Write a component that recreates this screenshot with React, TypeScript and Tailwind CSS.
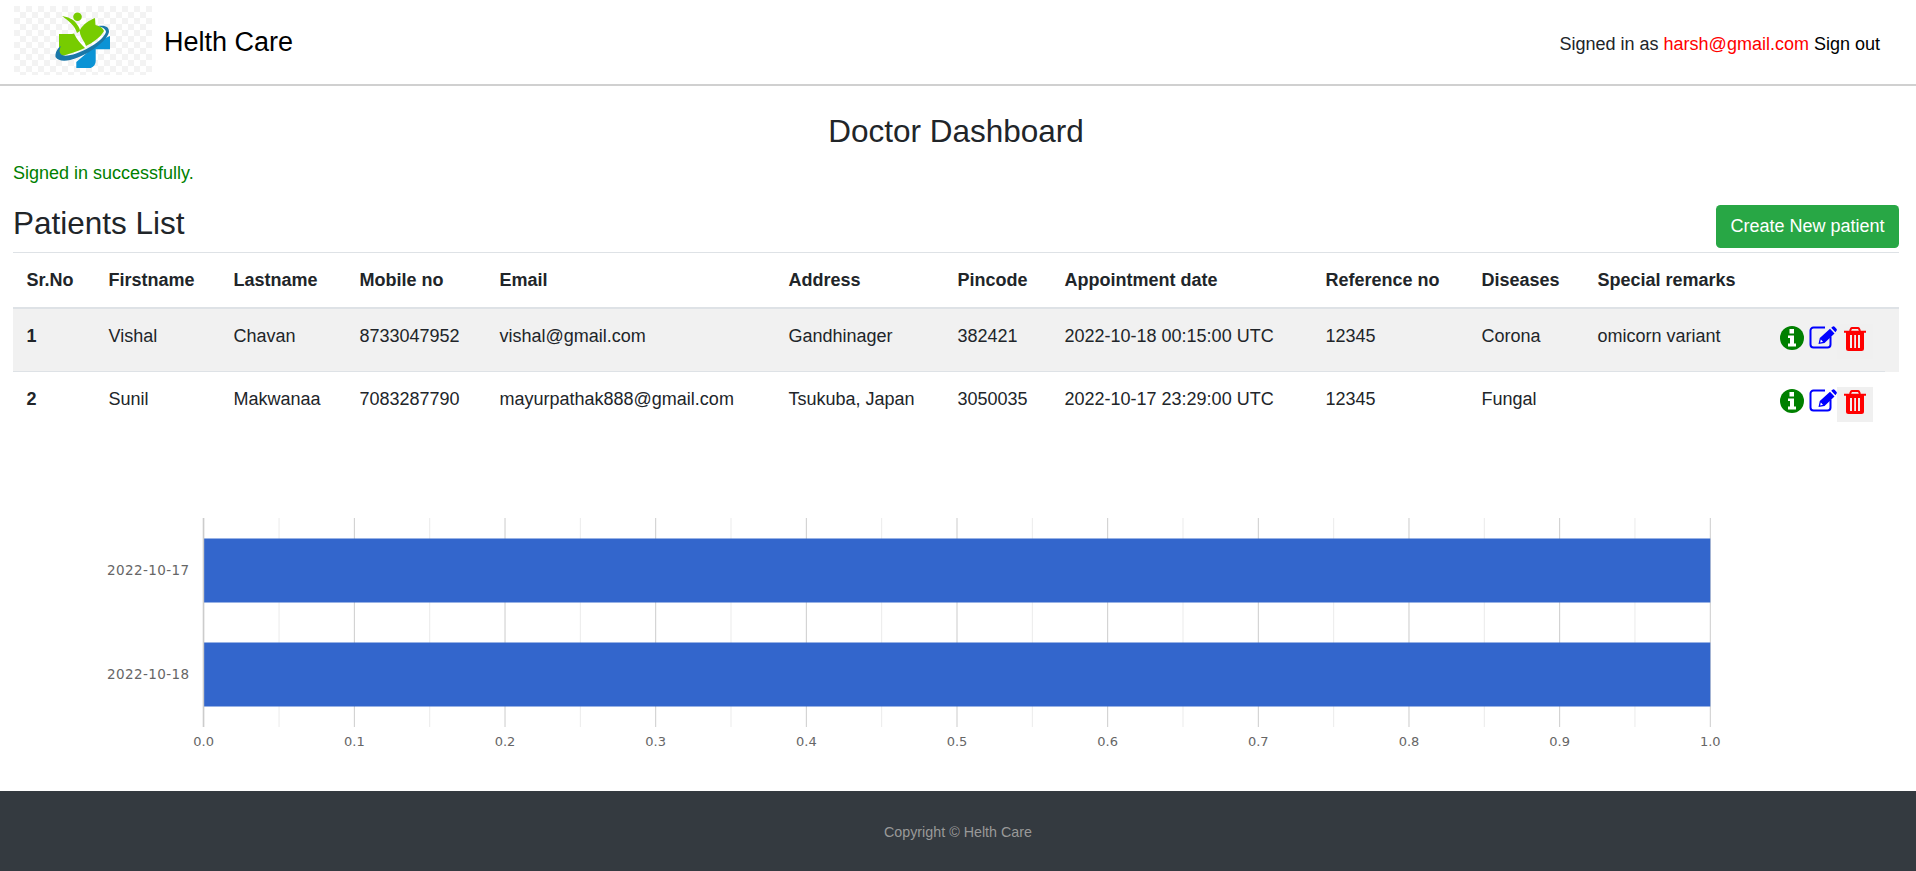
import React from 'react';

type Patient = {
  id: number;
  first: string;
  last: string;
  mobile: string;
  email: string;
  address: string;
  pincode: string;
  date: string;
  reference: string;
  disease: string;
  remarks: string;
};

const patients: Patient[] = [
  { id: 1, first: 'Vishal', last: 'Chavan', mobile: '8733047952', email: 'vishal@gmail.com', address: 'Gandhinager', pincode: '382421', date: '2022-10-18 00:15:00 UTC', reference: '12345', disease: 'Corona', remarks: 'omicorn variant' },
  { id: 2, first: 'Sunil', last: 'Makwanaa', mobile: '7083287790', email: 'mayurpathak888@gmail.com', address: 'Tsukuba, Japan', pincode: '3050035', date: '2022-10-17 23:29:00 UTC', reference: '12345', disease: 'Fungal', remarks: '' },
];

const headers = ['Sr.No', 'Firstname', 'Lastname', 'Mobile no', 'Email', 'Address', 'Pincode', 'Appointment date', 'Reference no', 'Diseases', 'Special remarks', ''];

const Logo = () => (
  <svg width="138" height="69" viewBox="0 0 138 69" className="block">
    <defs>
      <pattern id="checker" width="12" height="12" patternUnits="userSpaceOnUse">
        <rect width="12" height="12" fill="#ffffff" />
        <rect width="6" height="6" fill="#f3f3f3" />
        <rect x="6" y="6" width="6" height="6" fill="#f3f3f3" />
      </pattern>
    </defs>
    <rect width="138" height="69" fill="url(#checker)" />
    <path d="M62.3 56 L62.3 62 L76.7 62 Q81.7 60 81.7 55 L81.7 43.3 L96 43.3 L96 30 L89 33 Z" fill="#0b93d5" />
    <path d="M45 28 L58 28 L60 27.5 C63 34 67 38 71 42 C62 46 54 48 45 51 Z" fill="#77cc00" />
    <path d="M66 24 C69 18 76 14 81 12 L81.5 19 C86 20 89 22 90 25 C86 32 78 37 72 40 C70 34 65 30 66 24 Z" fill="#77cc00" />
    <circle cx="63.5" cy="10.7" r="4.3" fill="#77cc00" />
    <path d="M48 10 C54 11 59 13 62 17 C64 20 66 22 66 25 L63 27 C61 20 55 15 48 10 Z" fill="#77cc00" />
    <path d="M41.5 51 C41 46 44 42 47 40 C45 44 45 47 48 49 C56 53 88 38 92 26 C92 23 88 21 84 20 C92 19 95 21 95 26 C92 40 50 64 41.5 51 Z" fill="#1a77a8" />
  </svg>
);

const InfoIcon = () => (
  <svg width="24" height="24" viewBox="0 0 24 24" className="block shrink-0">
    <circle cx="12" cy="12" r="12" fill="#008000" />
    <path d="M9.5 3 H14 V7.5 H9.5 Z M8 9.5 H14 V17.5 H16 V20.5 H8 V17.5 H10 V12 H8 Z" fill="#ffffff" />
  </svg>
);

const EditIcon = () => (
  <svg width="28" height="24" viewBox="0 0 28 24" className="block shrink-0">
    <path d="M16 1.5 H4.5 A3 3 0 0 0 1.5 4.5 V18.5 A3 3 0 0 0 4.5 21.5 H18.5 A3 3 0 0 0 21.5 18.5 V10.5" fill="none" stroke="#0000ff" strokeWidth="2" />
    <path d="M9.5 18 L10.8 12 L21 2.8 L25.5 7.5 L15.5 17 Z M22.2 1.7 L23.8 0.5 Q24.8 0 25.6 0.8 L27.6 3 Q28.2 3.8 27.6 4.6 L26.4 6.3 Z" fill="#0000ff" />
    <path d="M11.8 13.5 L14 15.7 L11.2 16.4 Z" fill="#ffffff" />
  </svg>
);

const TrashIcon = () => (
  <svg width="22" height="24" viewBox="0 0 22 24" className="block shrink-0">
    <path d="M6 4 L7 1.6 Q7.4 1 8 1 H14 Q14.6 1 15 1.6 L16 4" fill="none" stroke="#ff0000" strokeWidth="2" />
    <path fillRule="evenodd" d="M0 3.7 H22 V5.7 H20 V21.5 Q20 24 17.5 24 H4.5 Q2 24 2 21.5 V5.7 H0 Z M6 8 V21 H8 V8 Z M10.2 8 V21 H12 V8 Z M14 8 V21 H16 V8 Z" fill="#ff0000" />
  </svg>
);

const Chart = () => {
  const x0 = 203.7;
  const x1 = 1710.3;
  const step = (x1 - x0) / 10;
  const major = Array.from({ length: 11 }, (_, i) => i);
  const minor = Array.from({ length: 10 }, (_, i) => i);
  const font = { fontFamily: '"DejaVu Sans", sans-serif', fontSize: 13, fill: '#666666' };
  const yFont = { ...font, fontSize: 13.5 };
  return (
    <svg width="1916" height="290" viewBox="0 0 1916 290" className="block">
      <g transform="translate(0,-500)">
        {minor.map((i) => (
          <rect key={i} x={x0 + step * (i + 0.5) - 0.5} y="517" width="1" height="209" fill="#ebebeb" />
        ))}
        {major.map((i) => (
          <rect key={i} x={x0 + step * i - 0.5} y="517" width="1" height="209" fill="#cccccc" />
        ))}
        <rect x={x0} y="537.5" width={x1 - x0} height="64" fill="#3366cc" />
        <rect x={x0} y="641.5" width={x1 - x0} height="64" fill="#3366cc" />
        <rect x={x0 - 1} y="517" width="1.5" height="209" fill="#cccccc" />
        <text x="189.5" y="574" textAnchor="end" letterSpacing="0.4" style={yFont}>2022-10-17</text>
        <text x="189.5" y="678" textAnchor="end" letterSpacing="0.4" style={yFont}>2022-10-18</text>
        {major.map((i) => (
          <text key={i} x={x0 + step * i} y="745" textAnchor="middle" style={font}>{(i / 10).toFixed(1)}</text>
        ))}
      </g>
    </svg>
  );
};

const App: React.FC = () => {
  return (
    <div className="min-h-screen bg-white flex flex-col font-['Liberation_Sans',Arial,sans-serif] text-[#212529] text-[18px] leading-[27px]">
      <nav className="h-[86px] border-b-2 border-[#d0d0d0] flex items-center justify-between pl-[14px] pr-[36px]">
        <div className="flex items-center gap-3">
          <div className="-mt-[3px]"><Logo /></div>
          <span className="text-[27px] text-black mt-[1px]">Helth Care</span>
        </div>
        <div className="mt-[4px]">
          Signed in as <span className="text-[#ff0000]">harsh@gmail.com</span> <span className="text-black">Sign out</span>
        </div>
      </nav>

      <main className="pl-[13px] pr-[17px]">
        <h3 className="text-[31.5px] text-center leading-[38px] mt-[26px]">Doctor Dashboard</h3>
        <p className="text-[#008000] mt-[9.5px]">Signed in successfully.</p>
        <div className="flex items-start justify-between mt-[17px] h-[48.5px]">
          <h3 className="text-[31.5px] leading-[38px]">Patients List</h3>
          <button className="bg-[#28a745] text-white rounded-[4.5px] h-[43px] w-[183px] mt-[1.5px]">Create New patient</button>
        </div>
        <table className="w-full table-fixed border-collapse border-t border-[#dee2e6]">
          <colgroup>
            <col className="w-[82px]" />
            <col className="w-[125px]" />
            <col className="w-[126px]" />
            <col className="w-[140px]" />
            <col className="w-[289px]" />
            <col className="w-[169px]" />
            <col className="w-[107px]" />
            <col className="w-[261px]" />
            <col className="w-[156px]" />
            <col className="w-[116px]" />
            <col className="w-[182px]" />
            <col className="w-[119px]" />
            <col className="w-[14px]" />
          </colgroup>
          <thead>
            <tr className="border-b-2 border-[#dee2e6]">
              {headers.map((h, i) => (
                <th key={i} className="text-left font-bold p-[13.5px] whitespace-nowrap">{h}</th>
              ))}
              <th></th>
            </tr>
          </thead>
          <tbody>
            {patients.map((p) => (
              <tr key={p.id} className="odd:bg-[#f1f1f1]">
                <td className="p-[13.5px] align-top font-bold border-b border-[#dee2e6] [tr:last-child_&]:border-b-0">{p.id}</td>
                {[p.first, p.last, p.mobile, p.email, p.address, p.pincode, p.date, p.reference, p.disease, p.remarks].map((v, i) => (
                  <td key={i} className="p-[13.5px] align-top whitespace-nowrap border-b border-[#dee2e6] [tr:last-child_&]:border-b-0">{v}</td>
                ))}
                <td className="px-[13.5px] pt-[15px] pb-[12px] align-top border-b border-[#dee2e6] [tr:last-child_&]:border-b-0">
                  <div className="flex items-start">
                    <div className="mt-[2px]"><InfoIcon /></div>
                    <div className="ml-[5px] mt-[2px]"><EditIcon /></div>
                    <span className="bg-[#f0f0f0] w-[36px] h-[35px] flex justify-center pt-[3px] shrink-0">
                      <TrashIcon />
                    </span>
                  </div>
                </td>
                <td></td>
              </tr>
            ))}
          </tbody>
        </table>
      </main>

      <div className="mt-[67px]">
        <Chart />
      </div>

      <footer className="bg-[#343a40] h-[81px] flex items-center justify-center text-[14.3px] text-[#999999] pt-[2px]">
        Copyright © Helth Care
      </footer>
    </div>
  );
};

export default App;
